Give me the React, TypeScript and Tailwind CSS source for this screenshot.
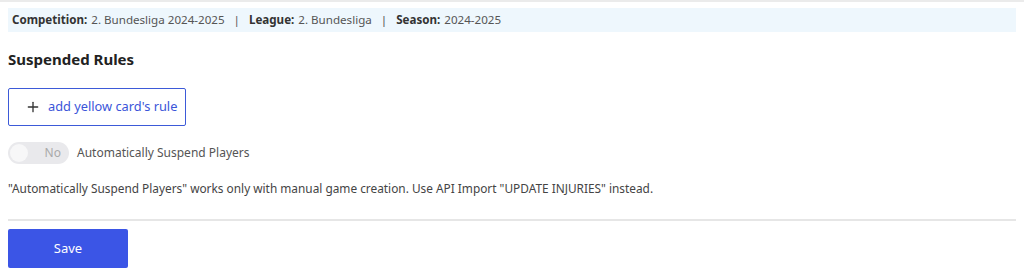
import { Plus } from 'lucide-react';

export default function App() {
  return (
    <div className="w-[1024px] h-[275px] bg-white border-t-2 border-[#ebebeb] px-2 pt-[6px]" style={{ fontFamily: '"Noto Sans", sans-serif' }}>
      <div className="h-6 bg-[#eef7fd] px-1 flex items-center text-[11.6px] text-[#555]">
        <span className="font-bold text-[#333] mr-1">Competition:</span>
        <span>2. Bundesliga 2024-2025</span>
        <span className="mx-[9px]">|</span>
        <span className="font-bold text-[#333] mr-1">League:</span>
        <span>2. Bundesliga</span>
        <span className="mx-[9px]">|</span>
        <span className="font-bold text-[#333] mr-1">Season:</span>
        <span>2024-2025</span>
      </div>

      <h2 className="mt-[17px] text-[15px] font-bold text-[#222] leading-5">Suspended Rules</h2>

      <button className="mt-[19px] w-[178px] h-[38px] border border-[#3d5ad8] rounded-[2px] flex items-center pl-4 text-[12.8px] text-[#3b55d9]">
        <Plus className="w-4 h-4 text-[#333] mr-[7px]" strokeWidth={2} />
        add yellow card's rule
      </button>

      <div className="mt-4 flex items-center gap-2">
        <div className="w-[61px] h-[22px] rounded-full bg-[#e9e9ec] relative flex items-center justify-end pr-[8px]">
          <div className="absolute left-[2px] top-[2px] w-[18px] h-[18px] rounded-full bg-[#f7f7f8]" />
          <span className="text-[12px] text-[#aaa]">No</span>
        </div>
        <span className="text-[12px] text-[#555]">Automatically Suspend Players</span>
      </div>

      <p className="mt-[14px] text-[11.85px] leading-5 text-[#444]">
        "Automatically Suspend Players" works only with manual game creation. Use API Import "UPDATE INJURIES" instead.
      </p>

      <div className="mt-[21px] border-t-2 border-[#e6e6e6]" />

      <button className="mt-[8px] w-[120px] h-[39px] bg-[#3b55e6] rounded-[2px] text-white text-[13px]">
        Save
      </button>
    </div>
  );
}
